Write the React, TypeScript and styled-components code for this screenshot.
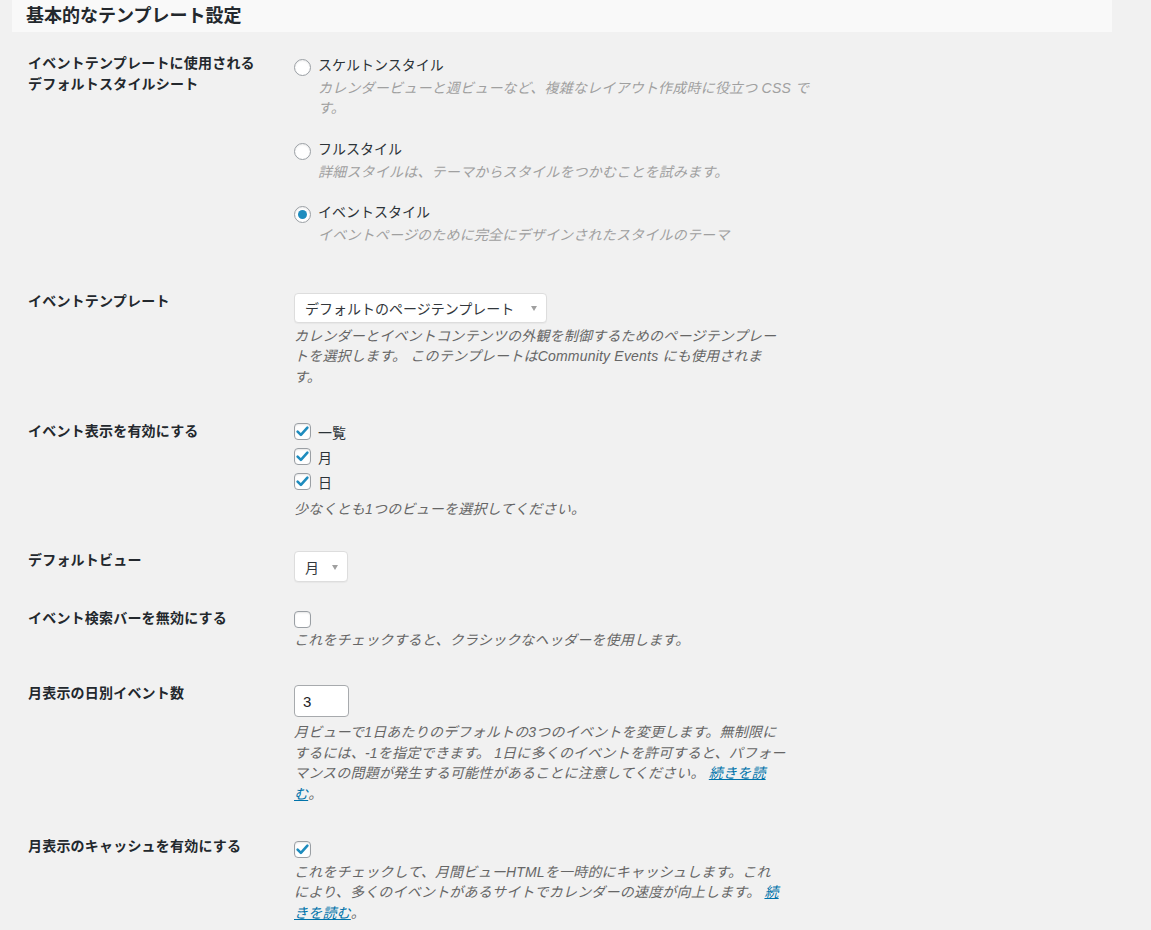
import React from "react";
import styled, { createGlobalStyle } from "styled-components";

const GlobalStyle = createGlobalStyle`
  html, body {
    margin: 0;
    padding: 0;
    background: #f1f1f1;
  }
  body {
    font-family: "Liberation Sans", "Noto Sans CJK JP", sans-serif;
    font-size: 14px;
    color: #23282d;
  }
  * { box-sizing: border-box; }
`;

const Page = styled.div`
  padding: 0 12px;
  min-height: 930px;
`;

const SectionHeader = styled.div`
  width: 1100px;
  height: 32px;
  background: #f9f9f9;
  display: flex;
  align-items: center;
  padding-left: 14px;
`;

const Title = styled.h2`
  margin: 0;
  font-size: 18px;
  line-height: 32px;
  font-weight: 700;
  color: #23282d;
`;

const Table = styled.div`
  padding-left: 16px;
  display: flex;
  flex-direction: column;
`;

const Row = styled.div<{ $gap: number }>`
  display: grid;
  grid-template-columns: 266px 560px;
  align-items: start;
  margin-top: ${(p) => p.$gap}px;
`;

const Label = styled.div`
  font-size: 14px;
  line-height: 21px;
  font-weight: 700;
  letter-spacing: 0.2px;
  color: #23282d;
  white-space: nowrap;
`;

const Field = styled.div<{ $shift: number }>`
  padding-top: ${(p) => p.$shift}px;
  display: flex;
  flex-direction: column;
  align-items: flex-start;
`;

const OptionGroup = styled.div<{ $mt?: number }>`
  margin-top: ${(p) => p.$mt ?? 0}px;
  display: flex;
  flex-direction: column;
`;

const Option = styled.label`
  display: flex;
  align-items: flex-start;
  gap: 7px;
  height: 21px;
  line-height: 21px;
  font-size: 14px;
  color: #2c3338;
  white-space: nowrap;
`;

const Radio = styled.span<{ $checked?: boolean }>`
  width: 17px;
  height: 17px;
  margin-top: 4px;
  border-radius: 50%;
  border: 1px solid #9a9fa4;
  background: #fff;
  box-shadow: inset 0 1px 2px rgba(0, 0, 0, 0.08);
  display: flex;
  align-items: center;
  justify-content: center;
  flex: none;
  &::after {
    content: "";
    display: ${(p) => (p.$checked ? "block" : "none")};
    width: 9px;
    height: 9px;
    border-radius: 50%;
    background: #1e8cbe;
  }
`;

const Desc = styled.p<{ $muted?: boolean; $indent?: number; $mt?: number }>`
  margin: ${(p) => p.$mt ?? 0}px 0 0 ${(p) => p.$indent ?? 0}px;
  font-size: 14px;
  line-height: 20.5px;
  font-style: italic;
  letter-spacing: 0.2px;
  color: ${(p) => (p.$muted ? "#a0a0a0" : "#666")};
  white-space: nowrap;
`;

const Link = styled.a`
  color: #0073aa;
  text-decoration: underline;
`;

const SelectBox = styled.div<{ $width: number; $height: number }>`
  width: ${(p) => p.$width}px;
  height: ${(p) => p.$height}px;
  background: #fff;
  border: 1px solid #ddd;
  border-radius: 4px;
  box-shadow: 0 1px 1px rgba(0, 0, 0, 0.04);
  display: flex;
  align-items: center;
  justify-content: space-between;
  padding: 0 9px 0 10px;
  font-size: 14px;
  color: #32373c;
  white-space: nowrap;
`;

const Arrow = styled.span`
  width: 0;
  height: 0;
  border-left: 3px solid transparent;
  border-right: 3px solid transparent;
  border-top: 5px solid #a0a0a0;
  margin-top: 2px;
`;

const CheckLine = styled.label<{ $mb?: number }>`
  display: flex;
  align-items: center;
  gap: 7px;
  height: 21px;
  margin-bottom: ${(p) => p.$mb ?? 0}px;
  font-size: 14px;
  color: #2c3338;
  white-space: nowrap;
`;

const Checkbox = styled.span`
  width: 17px;
  height: 17px;
  border: 1px solid #9a9fa4;
  border-radius: 4px;
  background: #fff;
  box-shadow: inset 0 1px 2px rgba(0, 0, 0, 0.1);
  display: flex;
  align-items: center;
  justify-content: center;
  flex: none;
`;

const NumberInput = styled.input`
  width: 55px;
  height: 32px;
  border: 1px solid #a7aaad;
  border-radius: 4px;
  background: #fff;
  padding: 0 8px;
  font-family: "Liberation Sans", "Noto Sans CJK JP", sans-serif;
  font-size: 15px;
  color: #1d2327;
  outline: none;
`;

const Check = () => (
  <svg width="15" height="15" viewBox="0 0 15 15" aria-hidden="true">
    <path
      d="M2.6 7.6 L5.9 10.9 L12.4 3.6"
      fill="none"
      stroke="#1e8cbe"
      strokeWidth="2.6"
      strokeLinecap="round"
      strokeLinejoin="round"
    />
  </svg>
);

const CheckboxIcon = ({ checked }: { checked?: boolean }) => (
  <Checkbox>{checked ? <Check /> : null}</Checkbox>
);

export default function App() {
  return (
    <>
      <GlobalStyle />
      <Page>
        <SectionHeader>
          <Title>基本的なテンプレート設定</Title>
        </SectionHeader>
        <Table>
          <Row $gap={21}>
            <Label>
              イベントテンプレートに使用される
              <br />
              デフォルトスタイルシート
            </Label>
            <Field $shift={1.5}>
              <OptionGroup>
                <Option>
                  <Radio />
                  スケルトンスタイル
                </Option>
                <Desc $muted $indent={24} $mt={2}>
                  カレンダービューと週ビューなど、複雑なレイアウト作成時に役立つ CSS で
                  <br />
                  す。
                </Desc>
              </OptionGroup>
              <OptionGroup $mt={20}>
                <Option>
                  <Radio />
                  フルスタイル
                </Option>
                <Desc $muted $indent={24} $mt={2}>
                  詳細スタイルは、テーマからスタイルをつかむことを試みます。
                </Desc>
              </OptionGroup>
              <OptionGroup $mt={20}>
                <Option>
                  <Radio $checked />
                  イベントスタイル
                </Option>
                <Desc $muted $indent={24} $mt={2}>
                  イベントページのために完全にデザインされたスタイルのテーマ
                </Desc>
              </OptionGroup>
            </Field>
          </Row>

          <Row $gap={45.5}>
            <Label>イベントテンプレート</Label>
            <Field $shift={1.5}>
              <SelectBox $width={253} $height={30}>
                デフォルトのページテンプレート
                <Arrow />
              </SelectBox>
              <Desc $mt={3}>
                カレンダーとイベントコンテンツの外観を制御するためのページテンプレー
                <br />
                トを選択します。 このテンプレートはCommunity Events にも使用されま
                <br />
                す。
              </Desc>
            </Field>
          </Row>

          <Row $gap={34}>
            <Label>イベント表示を有効にする</Label>
            <Field $shift={0}>
              <CheckLine $mb={4}>
                <CheckboxIcon checked />
                一覧
              </CheckLine>
              <CheckLine $mb={4}>
                <CheckboxIcon checked />
                月
              </CheckLine>
              <CheckLine>
                <CheckboxIcon checked />
                日
              </CheckLine>
              <Desc $mt={7}>少なくとも1つのビューを選択してください。</Desc>
            </Field>
          </Row>

          <Row $gap={30.25}>
            <Label>デフォルトビュー</Label>
            <Field $shift={1.5}>
              <SelectBox $width={54} $height={31}>
                月
                <Arrow />
              </SelectBox>
            </Field>
          </Row>

          <Row $gap={25.5}>
            <Label>イベント検索バーを無効にする</Label>
            <Field $shift={1}>
              <CheckLine>
                <CheckboxIcon />
              </CheckLine>
              <Desc>これをチェックすると、クラシックなヘッダーを使用します。</Desc>
            </Field>
          </Row>

          <Row $gap={33}>
            <Label>月表示の日別イベント数</Label>
            <Field $shift={2}>
              <NumberInput type="text" defaultValue="3" readOnly />
              <Desc $mt={4.75}>
                月ビューで1日あたりのデフォルトの3つのイベントを変更します。無制限に
                <br />
                するには、-1を指定できます。 1日に多くのイベントを許可すると、パフォー
                <br />
                マンスの問題が発生する可能性があることに注意してください。{" "}
                <Link href="#">
                  続きを読
                  <br />む
                </Link>
                。
              </Desc>
            </Field>
          </Row>

          <Row $gap={32.25}>
            <Label>月表示のキャッシュを有効にする</Label>
            <Field $shift={2.5}>
              <CheckLine>
                <CheckboxIcon checked />
              </CheckLine>
              <Desc $mt={2}>
                これをチェックして、月間ビューHTMLを一時的にキャッシュします。これ
                <br />
                により、多くのイベントがあるサイトでカレンダーの速度が向上します。{" "}
                <Link href="#">
                  続
                  <br />
                  きを読む
                </Link>
                。
              </Desc>
            </Field>
          </Row>
        </Table>
      </Page>
    </>
  );
}
